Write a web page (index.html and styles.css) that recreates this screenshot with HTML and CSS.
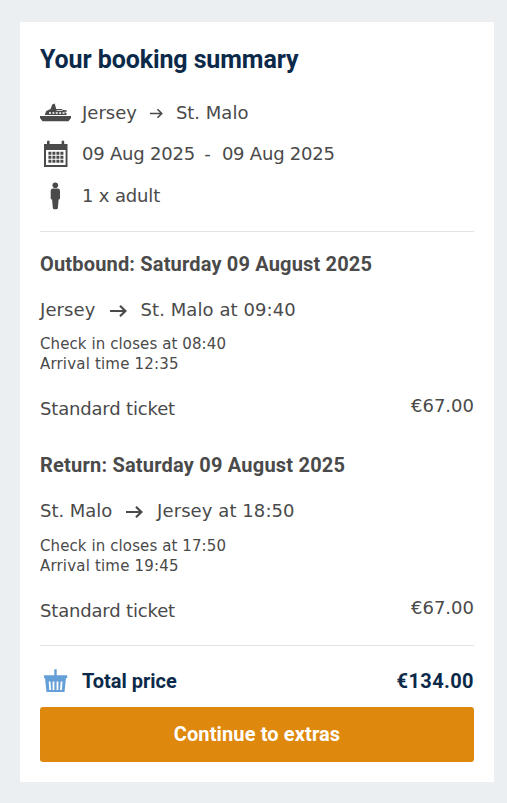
FILE: index.html
```html
<!DOCTYPE html>
<html lang="en">
<head>
<meta charset="utf-8">
<title>Your booking summary</title>
<link rel="stylesheet" href="styles.css">
</head>
<body>
<main class="card">
  <h1 class="title">Your booking summary</h1>
  <section class="overview">
    <div class="row">
      <svg class="icon" width="31" height="30" viewBox="0 0 31 30" fill="#4a4a4a"><path d="M0 18H31V20L28.5 23.3H2.5L0 20ZM4.7 17 6.2 13 10.6 11 12.2 6.5 14.7 5.5 16.2 11H22.2V12L26.7 12.3V13.8H24.5L26.5 15.3V17Z"/><path fill="#fff" d="M9 14.3h2v1.4H9zM12.4 14.3h2v1.4h-2zM15.8 14.3h2v1.4h-2zM19.2 14.3h2v1.4h-2zM22.6 14.3h2v1.4h-2zM16.5 12.2h6v.7h-6z"/></svg>
      <span class="place">Jersey</span>
      <svg class="arrow-small" width="13" height="11" viewBox="0 0 13 11" fill="none" stroke="#4a4a4a" stroke-width="1.6"><path d="M0 5.5H11.5M7.5 1.3 11.7 5.5 7.5 9.7"/></svg>
      <span class="place">St. Malo</span>
    </div>
    <div class="row">
      <svg class="icon" width="31" height="30" viewBox="0 0 31 30"><path fill="#4a4a4a" fill-rule="evenodd" d="M4 5H7V2.2Q8.3.8 9.6 2.2V5H21.6V2.2Q22.9.8 24.2 2.2V5H27.5V28H4ZM6 11V26H25.6V11Z"/><g stroke="#4a4a4a" stroke-width="3" stroke-dasharray="3 1"><path d="M8.4 14.3H23.5M8.4 18.3H23.5M8.4 22.3H23.5"/></g></svg>
      <span class="date">09 Aug 2025</span><span class="dash">-</span><span class="date">09 Aug 2025</span>
    </div>
    <div class="row">
      <svg class="icon" width="31" height="30" viewBox="0 0 31 30" fill="#4a4a4a"><circle cx="15.3" cy="4.2" r="2.8"/><path d="M12.8 7.6H17.8Q20 7.6 20 10V17.2Q20 18.5 18.6 18.5L17.9 26.8Q17.7 28.3 16.5 28.3H14.2Q13 28.3 12.8 26.8L12.1 18.5Q10.7 18.5 10.7 17.2V10Q10.7 7.6 12.8 7.6Z"/></svg>
      <span class="adult">1 x adult</span>
    </div>
  </section>
  <section class="trips">
    <article class="trip">
      <h2 class="trip-title">Outbound: Saturday 09 August 2025</h2>
      <p class="route"><span class="origin">Jersey</span><svg class="arrow" width="18" height="14" viewBox="0 0 18 14" fill="none" stroke="#4a4a4a" stroke-width="2.2"><path d="M0 7H15.5M10 1.8 15.4 7 10 12.2"/></svg><span class="dest">St. Malo at 09:40</span></p>
      <p class="times"><span class="checkin">Check in closes at 08:40</span><br><span class="arrival">Arrival time 12:35</span></p>
      <p class="fare"><span class="ticket">Standard ticket</span><span class="price">€67.00</span></p>
    </article>
    <article class="trip trip-return">
      <h2 class="trip-title">Return: Saturday 09 August 2025</h2>
      <p class="route"><span class="origin">St. Malo</span><svg class="arrow" width="18" height="14" viewBox="0 0 18 14" fill="none" stroke="#4a4a4a" stroke-width="2.2"><path d="M0 7H15.5M10 1.8 15.4 7 10 12.2"/></svg><span class="dest">Jersey at 18:50</span></p>
      <p class="times"><span class="checkin">Check in closes at 17:50</span><br><span class="arrival">Arrival time 19:45</span></p>
      <p class="fare"><span class="ticket">Standard ticket</span><span class="price">€67.00</span></p>
    </article>
  </section>
  <section class="total">
    <svg class="icon" width="31" height="30" viewBox="0 0 31 30"><path fill="#659fd7" d="M14.3 2.2H16.7V8.2H27.2V11H26L24.5 25H6.5L5 11H4V8.2H14.3Z"/><path fill="none" stroke="#fff" stroke-width="1.8" d="M9.6 14.5 10.2 23M13.5 14.5V23M17.5 14.5V23M21.6 14.5 21 23"/></svg>
    <span class="total-label">Total price</span><span class="total-price">€134.00</span>
  </section>
  <button class="continue" type="button"><span>Continue to extras</span></button>
</main>
</body>
</html>
```

FILE: styles.css
```css
* { box-sizing: border-box; }
body { margin: 0; padding: 22px 13px 21px 20px; background: #eceff2; color: #4a4a4a; font: 18px/24px "DejaVu Sans", sans-serif; }
h1, h2, p { margin: 0; }
svg { display: block; flex: none; }
.card { height: 760px; padding: 20px; background: #fff; }
.title { height: 50px; padding-top: 1px; font: 700 25px/34px Roboto, sans-serif; color: #0b2a4a; letter-spacing: -.1px; white-space: nowrap; }
.overview { height: 140px; border-bottom: 1px solid #e3e3e3; }
.row { display: flex; align-items: center; height: 41.5px; white-space: nowrap; }
.icon { margin-right: 11px; }
.arrow-small { margin: 2px 13px 0 13px; }
.date { letter-spacing: -.22px; }
.dash { width: 27px; padding-right: 2px; text-align: center; }
.adult { letter-spacing: -.15px; }
.trips { height: 414px; border-bottom: 1px solid #e3e3e3; }
.trip { height: 201.5px; padding-top: 19px; }
.trip-title { font: 700 20px/26px Roboto, sans-serif; white-space: nowrap; letter-spacing: .17px; }
.trip-return { padding-top: 18px; }
.trip-return .trip-title { letter-spacing: .21px; }
.route { display: flex; align-items: center; height: 24px; margin-top: 21px; white-space: nowrap; }
.arrow { margin: 2px 13px 0 14px; }
.origin { letter-spacing: .1px; }
.trip-return .origin { letter-spacing: -.05px; }
.dest { letter-spacing: .08px; }
.times { margin-top: 12px; font-size: 15px; line-height: 20px; }
.trip-return .times { margin-top: 13px; }
.checkin { letter-spacing: .1px; }
.arrival { letter-spacing: .18px; }
.fare { display: flex; justify-content: space-between; margin-top: 22px; padding-top: 1px; }
.ticket { letter-spacing: -.17px; }
.price { margin-top: -3px; }
.total { display: flex; align-items: center; height: 61px; padding-top: 10px; font: 700 20px/26px Roboto, sans-serif; color: #0b2a4a; }
.total-label { margin-top: -1px; }
.total-price { margin: -1px 0 0 auto; letter-spacing: .4px; }
.trip-return .route { margin-top: 21px; }
.continue { display: block; width: 100%; height: 55px; padding: 0 6px 2px; border: 0; border-radius: 3px; background: #de880d; color: #fff; font: 700 20px/26px Roboto, sans-serif; letter-spacing: .12px; }
```
